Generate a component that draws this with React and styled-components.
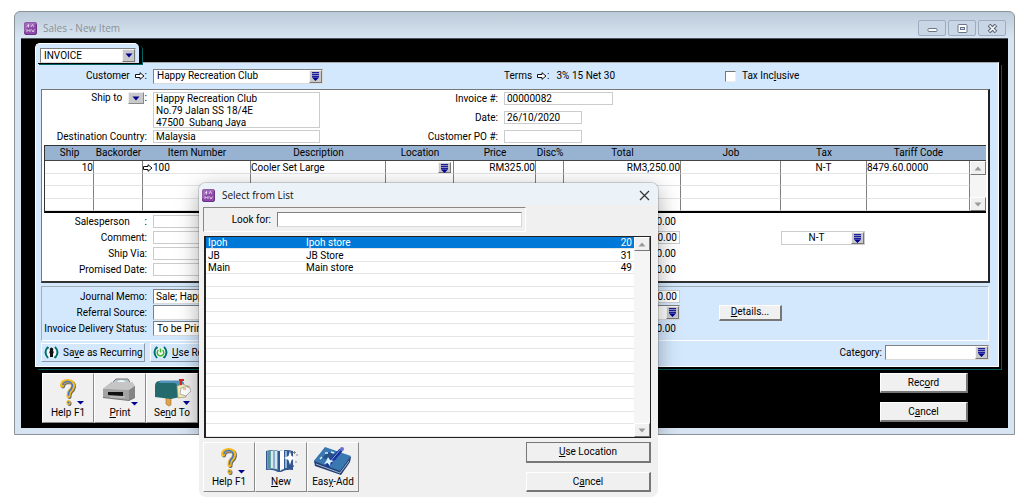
import React from "react";
import styled, { createGlobalStyle, css } from "styled-components";

const Global = createGlobalStyle`
  * { box-sizing: border-box; }
  body { margin: 0; background: #fff; }
  button, input, select, textarea, table { font: inherit; color: inherit; }
  svg { flex: none; }
`;

const Desktop = styled.div`
  position: relative;
  min-height: 100vh;
  padding: 11px 9px 8px 14px;
  font: 10px/12px Roboto, sans-serif;
  color: #000;
`;

/* ---------- windows ---------- */
const MainWindow = styled.main`
  border: 1px solid #8b9298;
  border-radius: 6px 6px 0 0;
  padding: 0 6px 6px;
  background: linear-gradient(#bccbd9 0, #d7e4f2 26px);
`;
const TitleBar = styled.header`
  display: flex;
  align-items: center;
  gap: 6px;
  height: 26px;
  padding: 6px 2px 0 3px;
  font: 10px/16px "Open Sans", sans-serif;
  color: #8a9097;
`;
const TitleText = styled.h1`
  flex: 1;
  margin: 0;
  font: inherit;
`;
const WindowButtons = styled.div`
  display: flex;
  gap: 2px;
`;
const WindowButton = styled.button`
  display: grid;
  place-items: center;
  width: 28px;
  height: 16px;
  padding: 0;
  border: 1px solid #9fabc0;
  border-radius: 2px;
  background: #c9d6e5;
`;
const Stage = styled.div`
  background: #000;
  border-top: 1px solid #4d565f;
  padding: 4px 9px 5px 14px;
`;
const Tab = styled.div`
  position: relative;
  width: 104px;
  height: 20px;
  margin-bottom: -1px;
  padding: 4px 4px 0;
  border: 1px solid #fff;
  border-width: 1px 0 0 1px;
  border-radius: 5px 5px 0 0;
  background: #d4e8fd;
  box-shadow: 3px 1px 0 #000, 4px 2px 0 #006467;
`;
const Panel = styled.section`
  padding: 0 8px 4px 5px;
  background: #d4e8fd;
  border: 1px solid #fff;
  border-top-color: #a8a8a8;
  box-shadow: 2px 2px 0 #000, 3px 3px 0 #005c60;
`;

/* ---------- form parts ---------- */
const Label = styled.label`
  flex: none;
  width: ${(p) => (p.$w ? p.$w + "px" : "auto")};
  text-align: right;
  white-space: nowrap;
`;
const sunken = css`
  border: 1px solid #d9d9d9;
  border-top-color: #808080;
  border-left-color: #808080;
`;
const Field = styled.input`
  display: block;
  flex: none;
  width: ${(p) => p.$w || 167}px;
  height: ${(p) => (p.$deep ? 15 : 13)}px;
  margin: 0;
  padding: 0 2px;
  border: 1px solid #ccc;
  border-radius: 0;
  background: #fff;
  line-height: 11px;
  text-align: ${(p) => p.$align || "left"};
  ${(p) => p.$deep && sunken}
`;
const Address = styled.textarea`
  display: block;
  flex: none;
  width: 167px;
  height: 36px;
  margin: 0;
  padding: 0 2px;
  border: 1px solid #ccc;
  resize: none;
  overflow: hidden;
  line-height: 12px;
`;
const ComboBox = styled.span`
  display: flex;
  flex: none;
  width: ${(p) => p.$w}px;
  height: ${(p) => p.$h || 15}px;
  background: #fff;
  ${(p) => (p.$flat ? "border: 1px solid #ccc;" : sunken)}
`;
const Select = styled.select`
  appearance: none;
  flex: 1;
  min-width: 0;
  padding: 0 3px;
  border: 0;
  border-radius: 0;
  background: transparent;
  line-height: 12px;
  text-align: ${(p) => p.$align || "left"};
  text-align-last: ${(p) => p.$align || "left"};
`;
const DropCap = styled.span`
  display: grid;
  place-items: center;
  flex: none;
  width: 13px;
  background: #c9c9cc;
  border: 1px solid #f4f4f4;
  border-right-color: #777;
  border-bottom-color: #777;
`;
const SmallDrop = styled.button`
  display: inline-grid;
  place-items: center;
  width: 16px;
  height: 12px;
  margin: 0 1px 0 3px;
  padding: 0;
  vertical-align: top;
  background: #c9c9cc;
  border: 1px solid #eee;
  border-right-color: #888;
  border-bottom-color: #888;
`;
const Row = styled.div`
  display: flex;
  align-items: ${(p) => (p.$top ? "flex-start" : "center")};
  gap: 6px;
  height: ${(p) => p.$h || 13}px;
`;
const Stack = styled.div`
  display: flex;
  flex-direction: column;
  gap: ${(p) => p.$gap}px;
`;
const CustomerRow = styled.div`
  display: flex;
  align-items: center;
  height: 26px;
`;
const CustomerCell = styled.div`
  display: flex;
  align-items: center;
  gap: 6px;
  width: 463px;
`;
const TermsCell = styled.div`
  display: flex;
  gap: 7px;
  width: 221px;
`;
const CheckLabel = styled.label`
  display: flex;
  align-items: center;
  gap: 6px;
`;
const CheckBox = styled.input`
  appearance: none;
  width: 11px;
  height: 11px;
  margin: 0;
  background: #fff;
  border: 1px solid #eee;
  border-top-color: #777;
  border-left-color: #777;
`;
const Sheet = styled.div`
  background: #fff;
  border: 1px solid #777;
  border-right: 2px solid #222;
  border-bottom: 2px solid #333;
  padding: 2px 3px 5px 0;
`;
const SheetHead = styled.div`
  display: flex;
  align-items: flex-start;
  margin-bottom: 2px;
`;
const Amount = styled.output`
  width: 100px;
  padding-right: 4px;
  text-align: right;
`;
const AmountSlot = styled.div`
  display: flex;
  justify-content: flex-end;
  width: 354px;
  margin-right: ${(p) => p.$gap || 0}px;
`;

/* ---------- item table ---------- */
const Items = styled.table`
  width: calc(100% - 2px);
  margin: 0 0 2px 2px;
  table-layout: fixed;
  border-collapse: separate;
  border-spacing: 0;
  border: 1px solid #333;
  border-bottom: 2px solid #000;
  border-right: 0;
  thead th {
    height: 15px;
    padding: 0;
    background: #98b3d1;
    border-bottom: 1px solid #444;
    font-weight: 400;
  }
  td {
    height: 13px;
    padding: 0;
    line-height: 11px;
    border-right: 1px solid #808080;
    border-bottom: 1px solid #e4e4e4;
    white-space: nowrap;
  }
  tr:nth-child(even) td { height: 12px; }
`;
const Cell = styled.td`
  text-align: ${(p) => p.$align || "left"};
`;
const InlineDrop = styled.span`
  display: flex;
  justify-content: flex-end;
  height: 11px;
  padding-right: 2px;
`;
const ScrollCell = styled.td`
  && { height: auto; border: 0; }
`;
const Scroll = styled.div`
  display: flex;
  flex-direction: column;
  justify-content: space-between;
  flex: none;
  width: 16px;
  height: ${(p) => (p.$h ? p.$h + "px" : "auto")};
  background: #f5f5f5;
`;
const ScrollButton = styled.button`
  display: grid;
  place-items: center;
  width: 16px;
  height: 14px;
  padding: 0;
  background: #f0f0f0;
  border: 1px solid #fff;
  border-right-color: #777;
  border-bottom-color: #777;
`;

/* ---------- lower part ---------- */
const MemoBox = styled.div`
  margin: 3px 1px 2px 0;
  padding: 2px 0 4px;
  border: 1px solid #a3adb8;
  border-right-color: #fff;
  border-bottom-color: #fff;
`;
const PushButton = styled.button`
  width: ${(p) => p.$w}px;
  height: ${(p) => p.$h || 20}px;
  padding: 0;
  background: #f0f0f0;
  border: 1px solid ${(p) => (p.$main ? "#777" : "#fff")};
  border-right: 2px solid #777;
  border-bottom: 2px solid #777;
  line-height: 12px;
`;
const RecurringRow = styled.div`
  display: flex;
  align-items: center;
  gap: 5px;
  padding-right: 1px;
`;
const RecurringButton = styled.button`
  display: flex;
  align-items: center;
  gap: 4px;
  height: 19px;
  width: 104px;
  padding: 0 2px;
  white-space: nowrap;
  background: #d4e8fd;
  border: 1px solid #fff;
  border-right-color: #8c98a6;
  border-bottom-color: #8c98a6;
`;
const CategoryCell = styled.div`
  display: flex;
  align-items: center;
  gap: 3px;
  margin-left: auto;
`;
const Footer = styled.footer`
  display: flex;
  justify-content: space-between;
  padding: 6px 31px 0 7px;
`;
const ToolRow = styled.div`
  display: flex;
`;
const ToolButton = styled.button`
  display: flex;
  flex-direction: column;
  align-items: center;
  justify-content: flex-end;
  width: 52px;
  height: 50px;
  padding: 0 0 3px;
  background: #f0f0f0;
  border: 1px solid #fff;
  border-right-color: #8a8a8a;
  border-bottom-color: #8a8a8a;
`;

/* ---------- dialog ---------- */
const Dialog = styled.section`
  position: absolute;
  left: 199px;
  top: 183px;
  width: 459px;
  padding: 0 7px 5px 4px;
  border-radius: 7px;
  background: #f0f0f0;
  isolation: isolate;
  &::before {
    content: "";
    position: absolute;
    inset: 0 0 62px 0;
    z-index: -1;
    border-radius: 7px 7px 0 0;
    box-shadow: 0 6px 22px rgba(0, 0, 0, 0.35), 0 0 0 1px rgba(0, 0, 0, 0.15);
    clip-path: inset(-30px -30px 0 -30px);
  }
`;
const DialogTitle = styled.header`
  display: flex;
  align-items: center;
  gap: 7px;
  height: 22px;
  margin: 0 -7px 2px -4px;
  padding: 2px 8px 0 3px;
  border-radius: 7px 7px 0 0;
  background: #ebf3f9;
  font: 10px/16px "Open Sans", sans-serif;
  color: #111;
`;
const CloseButton = styled.button`
  display: grid;
  padding: 0;
  border: 0;
  background: none;
`;
const LookFor = styled.div`
  display: flex;
  align-items: center;
  gap: 6px;
  width: 323px;
  height: 25px;
  padding-left: 2px;
  border: 1px solid #fff;
  border-top-color: #888;
  border-left-color: #888;
`;
const ListFrame = styled.div`
  display: flex;
  margin: 4px 0 4px 1px;
  border: 2px solid #222;
  border-width: 1px 1px 1px 2px;
  background: #fff;
`;
const ListTable = styled.table`
  flex: 1;
  table-layout: fixed;
  border-collapse: separate;
  border-spacing: 0;
  td {
    height: 12px;
    padding: 0 2px;
    line-height: 11px;
    border-bottom: 1px solid #e6e6e6;
  }
  tr:nth-child(even) td { height: 13px; }
`;
const ListRow = styled.tr`
  ${(p) => p.$selected && "background: #0078d7; color: #fff;"}
`;
const ListNumber = styled.td`
  text-align: right;
`;
const DialogFoot = styled.div`
  display: flex;
  justify-content: space-between;
`;

/* ---------- drawings ---------- */
const AppIcon = () => (
  <svg width="13" height="13" viewBox="0 0 13 13" aria-hidden="true">
    <rect x=".5" y=".5" width="12" height="12" rx="1.5" fill="#8d4aa8" stroke="#6b2f86" />
    <path d="M0 2Q0 0 2 0H11Q13 0 13 2L9 3L3 6L0 11Z" fill="#b58acb" opacity=".5" />
    <path d="M3 4.500L4.500 2.500V5.500M7 5L8.500 2.500L10 5M3 10V7.500L4.500 9L6 7.500V10M7.500 7.500L9 10L10.500 7.500" stroke="#fff" strokeWidth=".7" fill="none" />
  </svg>
);
const Triangle = ({ up, grey }) => (
  <svg width="8" height="5" viewBox="0 0 8 5" aria-hidden="true">
    <path d={up ? "M.5 4.500H7.500L4 .5Z" : "M.5 .5H7.500L4 4.500Z"} fill={grey ? "#999" : "#000090"} />
  </svg>
);
const ListArrow = () => (
  <svg width="9" height="11" viewBox="0 0 9 11" aria-hidden="true">
    <path d="M1 1H8V7H1Z" fill="#8c8cc4" />
    <path d="M1 1.500H8M1 3.500H8M1 5.500H8" stroke="#1c1c96" />
    <path d="M1 6.500H8L4.500 10Z" fill="#000090" />
  </svg>
);
const Zoom = () => (
  <svg width="10" height="8" viewBox="0 0 10 8" style={{ verticalAlign: "-1px" }} aria-hidden="true">
    <path d="M.5 2.500H5V.7L9 4L5 7.300V5.500H.5Z" fill="#fff" stroke="#111" />
  </svg>
);
const RecurIcon = ({ green }) => (
  <svg width="15" height="13" viewBox="0 0 15 13" aria-hidden="true">
    <circle cx="7.500" cy="6.500" r="5" fill="#f5f5f5" />
    <path d="M4 .8Q-1 6 4 12M11 .8Q16 6 11 12" stroke="#00706c" strokeWidth="1.900" fill="none" />
    <path d="M2.500 1L5 1L4 3.500ZM12.500 12L10 12L11 9.500Z" fill="#00706c" />
    {green ? (
      <g stroke="#35b82d" strokeWidth="1.500" fill="none">
        <path d="M5.500 4A3.300 3.300 0 1 0 9.500 4M7.500 2.500V6.500" />
      </g>
    ) : (
      <path d="M7.500 1.500Q10 2 9 4.500Q10.500 6 9 8V11H6V8Q4.500 6 6 4.500Q5 2 7.500 1.500Z" fill="#111" />
    )}
  </svg>
);
const HelpIcon = () => (
  <svg width="34" height="30" viewBox="0 0 34 30" aria-hidden="true">
    <path d="M11 8.500Q11.500 4 17 4Q22.500 4.500 22 9Q21.500 12 19 14Q17.500 15.500 17.500 19M17.500 25V26" transform="translate(1 1)" fill="none" stroke="#666" strokeWidth="4" strokeLinecap="round" />
    <path d="M11 8.500Q11.500 4 17 4Q22.500 4.500 22 9Q21.500 12 19 14Q17.500 15.500 17.500 19M17.500 25V26" fill="none" stroke="#f5b921" strokeWidth="4.200" strokeLinecap="round" />
    <path d="M12 7.500Q13 4.500 17 4.500Q21.500 5.500 21.300 9Q21 12 18.500 14Q17.500 15 17.500 18" fill="none" stroke="#4676c8" strokeWidth="1.700" strokeLinecap="round" />
    <circle cx="17.500" cy="25.500" r="1.100" fill="#4676c8" />
    <path d="M26 24H33L29.500 27.500Z" fill="#000090" />
  </svg>
);
const PrintIcon = () => (
  <svg width="38" height="30" viewBox="0 0 38 30" aria-hidden="true">
    <path d="M12 5L15 2H27L30 7H12Z" fill="#b8c8cf" stroke="#777" />
    <path d="M16 5Q20 1 25 5Z" fill="#eef8fb" />
    <path d="M2 12L11 5H31L34 10V21L28 24L2 21Z" fill="#777" />
    <path d="M2 12L11 5H31L34 9L28 14Z" fill="#c5c5c5" />
    <path d="M2 12L28 13V23L2 20Z" fill="#a3a3a3" />
    <path d="M28 13L34 9V20L28 23Z" fill="#858585" />
    <path d="M7 15H22V19L7 18Z" fill="#111" />
    <path d="M9 20H24" stroke="#ccc" />
    <path d="M30 25H37L33.500 28.500Z" fill="#000090" />
  </svg>
);
const MailIcon = () => (
  <svg width="38" height="30" viewBox="0 0 38 30" aria-hidden="true">
    <path d="M13 19H18V28L15.500 29L13 27Z" fill="#dda353" stroke="#a67022" strokeWidth=".6" />
    <path d="M2 9Q2 4 7 4H29L27 20L18 22L2 20Z" fill="#236a6d" />
    <path d="M7 3.500H28Q32 5 31 8L24 10Q24 6 21 6H6Z" fill="#5292b8" />
    <path d="M24 9L30 7L36 10L33 20L25 21Z" fill="#f4ebb3" stroke="#9d987d" strokeWidth=".7" />
    <path d="M28 11L36 9L38 14L33 19L27 17Z" fill="#fff" stroke="#888" strokeWidth=".6" />
    <path d="M28 8V3.500M26 3H31" stroke="#dd2222" strokeWidth="2" />
    <path d="M30 12H33M34 10H36" stroke="#d84" />
    <path d="M30 24H37L33.500 28Z" fill="#000090" />
  </svg>
);
const NewIcon = () => (
  <svg width="34" height="30" viewBox="0 0 34 30" aria-hidden="true">
    <path d="M2 5Q9 3 15 5Q22 3 29 5V24Q22 23 17 26H14Q9 23 2 24Z" fill="#32568e" />
    <path d="M3 5Q8 4 14 5V24Q9 22 3 23Z" fill="#6aa5a3" />
    <path d="M7 5Q10 4 13 5V23Q10 22 7 22Z" fill="#d6e9ee" />
    <path d="M16 5Q19 4 20 4V23Q18 23 16 25Z" fill="#fff" />
    <path d="M22 5V22" stroke="#8db4d8" strokeWidth="2" />
    <path d="M5 5V22M10 5V22" stroke="#4376b0" />
    <path d="M26 5L27.500 10L32 12L27.500 14L26 19L24.500 14L20 12L24.500 10Z" fill="#fff" />
    <path d="M30.500 5V8M29 6.500H32M31 16H33M29.500 19V21M32 9H34" stroke="#888" />
  </svg>
);
const EasyIcon = () => (
  <svg width="38" height="32" viewBox="0 0 38 32" aria-hidden="true">
    <path d="M0 17L11 4L37 13L36 18L27 31L1 22Z" fill="#243e70" />
    <path d="M0 17L11 3L37 12L26 27Z" fill="#3a78b2" />
    <path d="M8 14L14 8L21 10L16 16Z" fill="#285287" />
    <path d="M6 15L8 13M11 9H14M17 8L20 9M16 17L18 18" stroke="#d8eefa" strokeWidth="1.500" />
    <path d="M13 22L27 6" stroke="#182e98" strokeWidth="4" />
    <path d="M14 20L27 5" stroke="#7aa8e8" strokeWidth="1" />
    <path d="M14 13L16 16L20 17L16.500 18.500L16 22L13.500 19L10 20L12.500 16.500Z" fill="#d9f2ff" />
    <circle cx="28" cy="5" r="2" fill="#6370ce" />
    <path d="M2 20L26 29L35 17" stroke="#98b5d9" fill="none" />
  </svg>
);

const Combo = ({ id, label, w, h, value, flat, simple, align }) => (
  <ComboBox $w={w} $h={h} $flat={flat}>
    <Select id={id} aria-label={label} $align={align} defaultValue={value}>
      <option>{value}</option>
    </Select>
    <DropCap>{simple ? <Triangle /> : <ListArrow />}</DropCap>
  </ComboBox>
);
const ScrollBar = ({ h }) => (
  <Scroll $h={h}>
    <ScrollButton aria-label="Scroll up"><Triangle up grey /></ScrollButton>
    <ScrollButton aria-label="Scroll down"><Triangle grey /></ScrollButton>
  </Scroll>
);

const columns = [
  ["Ship", 49], ["Backorder", 49], ["Item Number", 108], ["Description", 135],
  ["Location", 68], ["Price", 82], ["Disc%", 28], ["Total", 117],
  ["Job", 100], ["Tax", 86], ["Tariff Code", 103], ["", 16],
];
const locations = [["Ipoh", "Ipoh store", 20], ["JB", "JB Store", 31], ["Main", "Main store", 49]];
const listRows = Array.from({ length: 16 }, (_, i) => locations[i] || ["", "", ""]);
const blanks = Array.from({ length: 11 });

export default function App() {
  return (
    <Desktop>
      <Global />
      <MainWindow>
        <TitleBar>
          <AppIcon />
          <TitleText>Sales - New Item</TitleText>
          <WindowButtons>
            <WindowButton aria-label="Minimize">
              <svg width="11" height="9"><rect x="1" y="4.500" width="9" height="3" rx="1" fill="#fff" stroke="#68758a" /></svg>
            </WindowButton>
            <WindowButton aria-label="Maximize">
              <svg width="11" height="9"><rect x="1" y=".5" width="9" height="8" rx="1" fill="#fff" stroke="#68758a" /><rect x="3.500" y="3.500" width="4" height="2" fill="#d5deea" stroke="#68758a" /></svg>
            </WindowButton>
            <WindowButton aria-label="Close">
              <svg width="11" height="9"><path d="M2 1L9 8M9 1L2 8" stroke="#59657a" strokeWidth="3.800" /><path d="M2.500 1.500L8.500 7.500M8.500 1.500L2.500 7.500" stroke="#fff" strokeWidth="1.600" /></svg>
            </WindowButton>
          </WindowButtons>
        </TitleBar>
        <Stage>
          <Tab><Combo label="Sale type" w={96} value="INVOICE" simple /></Tab>
          <Panel>
            <CustomerRow>
              <CustomerCell>
                <Label $w={106} htmlFor="customer">Customer&nbsp; <Zoom />:</Label>
                <Combo id="customer" w={170} value="Happy Recreation Club" />
              </CustomerCell>
              <TermsCell><span>Terms&nbsp; <Zoom />:</span><span>3% 15 Net 30</span></TermsCell>
              <CheckLabel><CheckBox type="checkbox" /><span>Tax Inc<u>l</u>usive</span></CheckLabel>
            </CustomerRow>
            <Sheet>
              <SheetHead>
                <Stack $gap={2}>
                  <Row $h={36} $top>
                    <Label $w={105} htmlFor="shipto">Ship to <SmallDrop aria-label="Choose address"><Triangle /></SmallDrop>:</Label>
                    <Address id="shipto" defaultValue={"Happy Recreation Club\nNo.79 Jalan SS 18/4E\n47500  Subang Jaya"} />
                  </Row>
                  <Row><Label $w={105} htmlFor="country">Destination Country:</Label><Field id="country" defaultValue="Malaysia" /></Row>
                </Stack>
                <Stack $gap={6}>
                  <Row><Label $w={178} htmlFor="invno">Invoice #:</Label><Field id="invno" $w={109} defaultValue="00000082" /></Row>
                  <Row><Label $w={178} htmlFor="date">Date:</Label><Field id="date" $w={78} defaultValue="26/10/2020" /></Row>
                  <Row><Label $w={178} htmlFor="po">Customer PO #:</Label><Field id="po" $w={78} /></Row>
                </Stack>
              </SheetHead>
              <Items>
                <colgroup>{columns.map(([name, w]) => <col key={name} width={w} />)}</colgroup>
                <thead><tr>{columns.map(([name]) => <th key={name}>{name}</th>)}</tr></thead>
                <tbody>
                  <tr>
                    <Cell $align="right">10</Cell>
                    <Cell />
                    <Cell><Zoom />100</Cell>
                    <Cell>Cooler Set Large</Cell>
                    <Cell><InlineDrop><DropCap><ListArrow /></DropCap></InlineDrop></Cell>
                    <Cell $align="right">RM325.00</Cell>
                    <Cell />
                    <Cell $align="right">RM3,250.00</Cell>
                    <Cell />
                    <Cell $align="center">N-T</Cell>
                    <Cell>8479.60.0000</Cell>
                    <ScrollCell rowSpan={4}><ScrollBar h={50} /></ScrollCell>
                  </tr>
                  {[1, 2, 3].map((r) => <tr key={r}>{blanks.map((_, i) => <Cell key={i} />)}</tr>)}
                </tbody>
              </Items>
              <Stack $gap={3}>
                <Row>
                  <Label $w={105} htmlFor="sales">Salesperson &nbsp; &nbsp; &nbsp;:</Label><Field id="sales" />
                  <AmountSlot><Amount>$0.00</Amount></AmountSlot>
                </Row>
                <Row>
                  <Label $w={105} htmlFor="comment">Comment:</Label><Field id="comment" />
                  <AmountSlot $gap={95}><Field $w={100} $align="right" aria-label="Freight" defaultValue="$0.00" /></AmountSlot>
                  <Combo label="Freight tax" w={84} h={14} value="N-T" flat align="center" />
                </Row>
                <Row>
                  <Label $w={105} htmlFor="via">Ship Via:</Label><Field id="via" />
                  <AmountSlot><Amount>$0.00</Amount></AmountSlot>
                </Row>
                <Row>
                  <Label $w={105} htmlFor="promised">Promised Date:</Label><Field id="promised" />
                  <AmountSlot><Amount>$0.00</Amount></AmountSlot>
                </Row>
              </Stack>
            </Sheet>
            <MemoBox>
              <Stack $gap={1}>
                <Row $h={15}>
                  <Label $w={105} htmlFor="memo">Journal Memo:</Label><Field id="memo" $deep defaultValue="Sale; Happy Recreation Club" />
                  <AmountSlot><Field $w={100} $align="right" aria-label="Paid today" defaultValue="$0.00" /></AmountSlot>
                </Row>
                <Row $h={15}>
                  <Label $w={105} htmlFor="referral">Referral Source:</Label><Field id="referral" $deep />
                  <AmountSlot $gap={33}><Combo label="Payment method" w={100} value="" /></AmountSlot>
                  <PushButton $w={63} $h={16}><u>D</u>etails...</PushButton>
                </Row>
                <Row $h={15}>
                  <Label $w={105} htmlFor="delivery">Invoice Delivery Status:</Label><Combo id="delivery" w={167} value="To be Printed" />
                  <AmountSlot><Amount>$0.00</Amount></AmountSlot>
                </Row>
              </Stack>
            </MemoBox>
            <RecurringRow>
              <RecurringButton><RecurIcon /><span>Sa<u>v</u>e as Recurring</span></RecurringButton>
              <RecurringButton><RecurIcon green /><span><u>U</u>se Recurring</span></RecurringButton>
              <CategoryCell><label htmlFor="category">Category:</label><Combo id="category" w={104} value="" /></CategoryCell>
            </RecurringRow>
          </Panel>
          <Footer>
            <ToolRow>
              <ToolButton><HelpIcon /><span>Help F1</span></ToolButton>
              <ToolButton><PrintIcon /><span><u>P</u>rint</span></ToolButton>
              <ToolButton><MailIcon /><span>Se<u>n</u>d To</span></ToolButton>
            </ToolRow>
            <Stack $gap={9}>
              <PushButton $w={88}>Rec<u>o</u>rd</PushButton>
              <PushButton $w={88}>C<u>a</u>ncel</PushButton>
            </Stack>
          </Footer>
        </Stage>
      </MainWindow>

      <Dialog role="dialog" aria-label="Select from List">
        <DialogTitle>
          <AppIcon />
          <TitleText>Select from List</TitleText>
          <CloseButton aria-label="Close">
            <svg width="11" height="11"><path d="M1 1L10 10M10 1L1 10" stroke="#333" strokeWidth="1.200" /></svg>
          </CloseButton>
        </DialogTitle>
        <LookFor><Label $w={65} htmlFor="look">Look for:</Label><Field id="look" $deep $w={245} /></LookFor>
        <ListFrame>
          <ListTable>
            <colgroup><col width="98" /><col /><col width="60" /></colgroup>
            <tbody>
              {listRows.map(([name, store, count], i) => (
                <ListRow key={i} $selected={i === 0}>
                  <td>{name}</td><td>{store}</td><ListNumber>{count}</ListNumber>
                </ListRow>
              ))}
            </tbody>
          </ListTable>
          <ScrollBar />
        </ListFrame>
        <DialogFoot>
          <ToolRow>
            <ToolButton><HelpIcon /><span>Help F1</span></ToolButton>
            <ToolButton><NewIcon /><span><u>N</u>ew</span></ToolButton>
            <ToolButton><EasyIcon /><span>Eas<u>y</u>-Add</span></ToolButton>
          </ToolRow>
          <Stack $gap={9}>
            <PushButton $w={125} $h={21} $main><u>U</u>se Location</PushButton>
            <PushButton $w={125}>C<u>a</u>ncel</PushButton>
          </Stack>
        </DialogFoot>
      </Dialog>
    </Desktop>
  );
}
